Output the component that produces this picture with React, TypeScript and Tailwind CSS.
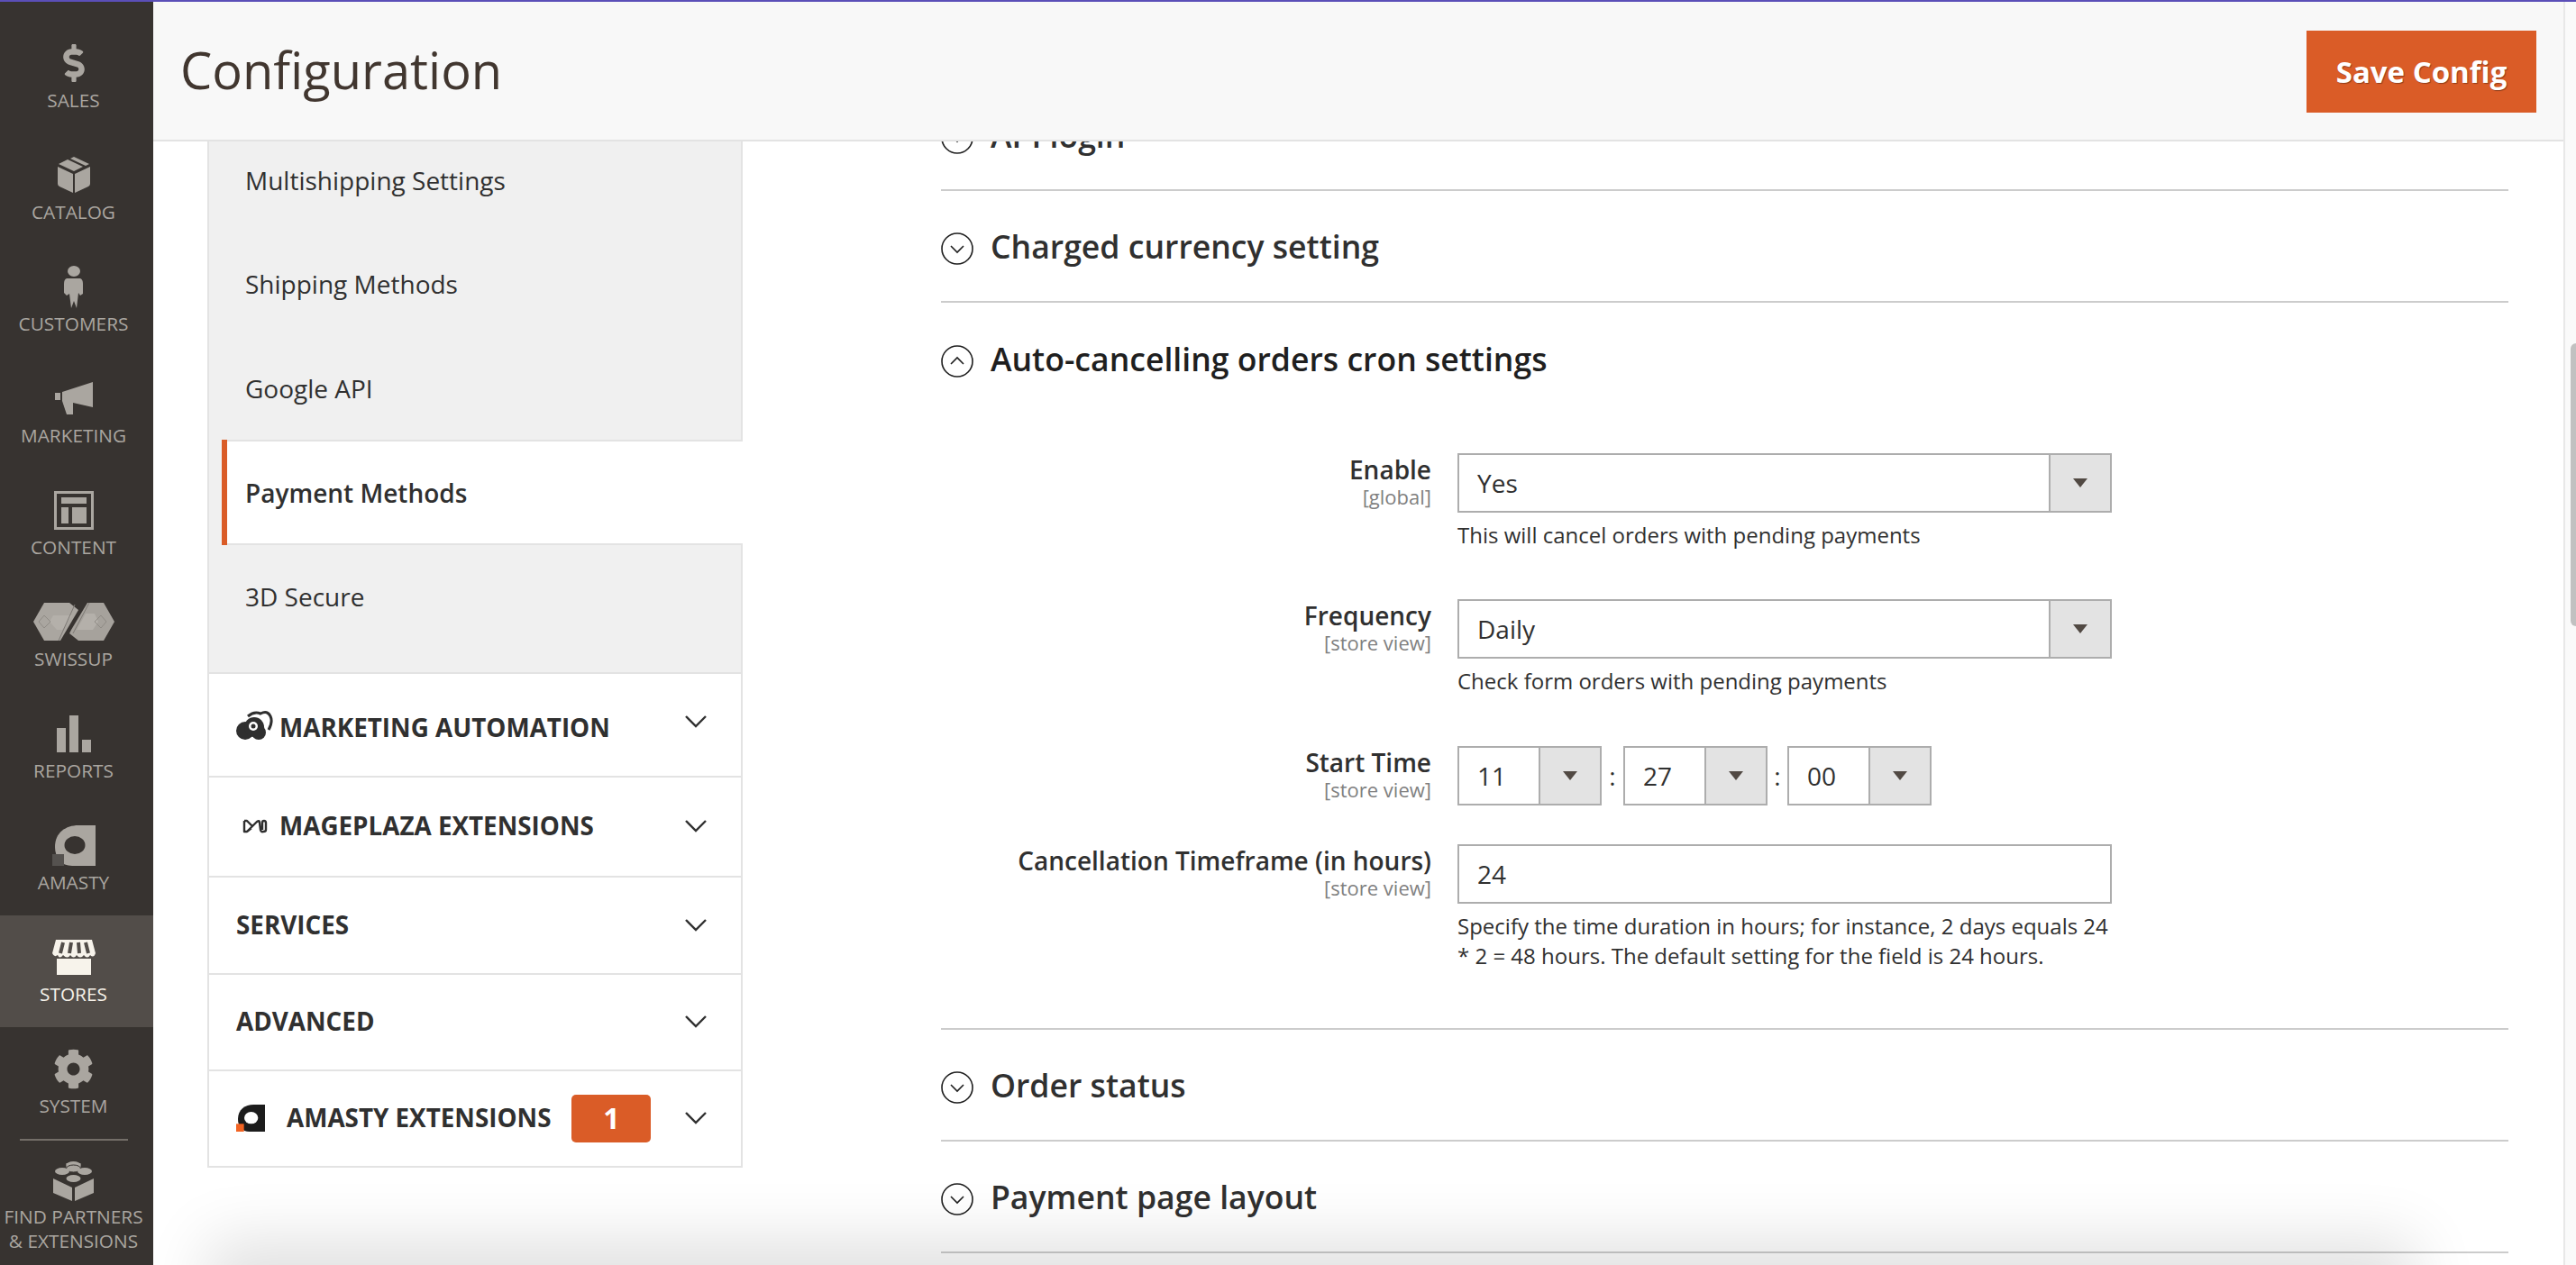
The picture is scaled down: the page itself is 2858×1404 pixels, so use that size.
import { FaCog, FaDollarSign } from "react-icons/fa";
import type { ReactNode } from "react";

function BoxIcon() {
  return (
    <svg viewBox="0 0 36 40" className="h-[40px] w-[36px] fill-[#aaa6a0]">
      <path d="M0 11 17 19V40L2 33Q0 32 0 30Z" />
      <path d="M36 11 19 19V40L34 33Q36 32 36 30Z" />
      <path d="M1 8 11 3 28 11 18 16Z" />
      <path d="M14 2 18 0 35 8 31 10Z" />
    </svg>
  );
}

function PersonIcon() {
  return (
    <svg viewBox="0 0 21 47" className="h-[47px] w-[21px] fill-[#aaa6a0]">
      <ellipse cx="11" cy="6" rx="7" ry="6" />
      <path d="M3 14H18Q21 15 21 20V31L18 33 16 30 14 47 11 39 8 47 6 31 3 33 0 30V20Q0 15 3 14Z" />
    </svg>
  );
}

function MegaphoneIcon() {
  return (
    <svg viewBox="0 0 42 36" className="h-[36px] w-[42px] fill-[#aaa6a0]">
      <path d="M0 12H6V20H0Z" />
      <path d="M8 11 42 0V28L20 23 20 36 13 36 8 21Z" />
    </svg>
  );
}

function ContentIcon() {
  return (
    <svg viewBox="0 0 44 43" className="h-[43px] w-[44px] fill-[#aaa6a0]">
      <path d="M0 0H44V43H0ZM3 3V40H41V3Z" fillRule="evenodd" />
      <rect x="8" y="7" width="28" height="7" />
      <rect x="8" y="18" width="8" height="18" />
      <rect x="20" y="18" width="16" height="18" />
    </svg>
  );
}

function SwissupIcon() {
  return (
    <svg viewBox="0 0 90 42" className="h-[42px] w-[90px]">
      <path d="M12 0H40L50 8 30 42H12L0 21Z" fill="#aaa6a0" />
      <path d="M50 0H78L90 21 78 42H50L40 34 42 30 60 0Z" fill="#a6a29c" />
      <path d="M22 14H36L43 14 32 30H26L18 21Z" fill="#b4b0aa" />
      <path d="M58 12H68L72 21 66 30H48Z" fill="#b4b0aa" />
      <path d="M12 14 19 21 12 28 6 21Z" fill="none" stroke="#8f8b85" strokeWidth="1" />
      <path d="M75 14 81 21 75 28 68 21Z" fill="none" stroke="#8f8b85" strokeWidth="1" />
      <path d="M46 2 28 42M62 0 44 34" stroke="#7d7974" strokeWidth="1" fill="none" />
    </svg>
  );
}

function ReportsIcon() {
  return (
    <svg viewBox="0 0 38 41" className="h-[41px] w-[38px] fill-[#aaa6a0]">
      <rect x="0" y="14" width="10" height="27" />
      <rect x="14" y="0" width="10" height="41" />
      <rect x="28" y="27" width="10" height="14" />
    </svg>
  );
}

// the small "a" mark, used in the menu and in the config tree
function AmastyMark({ body, corner, hole, className }: { body: string; corner: string; hole: string; className: string }) {
  return (
    <svg viewBox="0 0 48 45" className={className}>
      <path d="M3 24C3 8 15 0 29 0H48V45H22C10 45 3 36 3 24Z" fill={body} />
      <ellipse cx="25" cy="22" rx="11.5" ry="10" fill={hole} />
      <rect x="0" y="32" width="13" height="13" fill={corner} />
    </svg>
  );
}

function StoreIcon() {
  return (
    <svg viewBox="0 0 48 39" className="h-[39px] w-[48px] fill-[#f7f3eb]">
      <path d="M4 0H44L48 15Q46 21 42 17 39 22 35 17 31 22 27 17 24 22 20 17 17 22 12 17 8 22 6 17 2 20 0 15Z" />
      <path d="M12 3 9 15M21 3 19 15M29 3 30 15M37 3 40 15" stroke="#524d49" strokeWidth="4" />
      <path d="M5 21H43V39H5Z" />
    </svg>
  );
}

function LegoIcon() {
  return (
    <svg viewBox="0 0 45 45" className="h-[45px] w-[45px] fill-[#aaa6a0]">
      <path d="M0 20 21 30V45L0 36Z" />
      <path d="M45 20 24 30V45L45 36Z" />
      <ellipse cx="22.5" cy="5" rx="8" ry="4" />
      <rect x="14.5" y="3" width="16" height="5" />
      <ellipse cx="22.5" cy="9" rx="8" ry="4" stroke="#373330" />
      <ellipse cx="10" cy="12" rx="8" ry="4" />
      <ellipse cx="35" cy="12" rx="8" ry="4" />
      <ellipse cx="22.5" cy="20" rx="8" ry="4" />
    </svg>
  );
}

function CloudIcon() {
  return (
    <svg viewBox="0 0 42 37" className="h-[37px] w-[42px]">
      <path d="M13 9Q20 3 27 6 35 2 38 9 41 15 36 24" fill="none" stroke="#2f2f2f" strokeWidth="3" />
      <circle cx="10" cy="25" r="10" fill="#2f2f2f" />
      <circle cx="20" cy="21" r="11" fill="#2f2f2f" />
      <circle cx="25" cy="27" r="8" fill="#2f2f2f" />
      <circle cx="19" cy="20" r="5" fill="#fff" />
      <circle cx="19" cy="20" r="2.5" fill="#2f2f2f" />
    </svg>
  );
}

function MageplazaIcon() {
  return (
    <svg viewBox="0 0 28 16" className="h-[16px] w-[28px]" fill="none" stroke="#2f2f2f" strokeWidth="2.4">
      <path d="M2 2V14L5 14 16 3Q19 1 19 4L20 12Q21 15 23 14 26 14 26 12V4Q26 2 24 2 22 2 22 4V12M2 2 5 2 11 8M5 14 10 10" strokeLinejoin="round" />
    </svg>
  );
}

function ChevronDown() {
  return (
    <svg viewBox="0 0 24 14" className="h-[14px] w-[24px]" fill="none" stroke="#303030" strokeWidth="2.4">
      <path d="M1 1 12 12 23 1" />
    </svg>
  );
}

function CircleArrow({ open }: { open?: boolean }) {
  return (
    <svg viewBox="0 0 36 36" className="mt-[5px] h-[36px] w-[36px] shrink-0" fill="none" stroke="#1f1f1f" strokeWidth="1.6">
      <circle cx="18" cy="18" r="17" />
      {open ? <path d="M11 21 18 14 25 21" /> : <path d="M11 15 18 22 25 15" />}
    </svg>
  );
}

function Arrow() {
  return <span className="h-0 w-0 border-x-[8px] border-t-[10px] border-x-transparent border-t-[#514943]" />;
}

function MenuItem({ label, icon, active }: { label: ReactNode; icon: ReactNode; active?: boolean }) {
  return (
    <div className={`flex h-[124px] flex-col items-center pr-[7px] pt-[22px] ${active ? "bg-[#524d49] text-[#f7f3eb]" : "text-[#aaa6a0]"}`}>
      <div className="flex h-[48px] items-center justify-center">{icon}</div>
      <div className="mt-[4px] whitespace-nowrap text-center text-[20.8px] leading-[27px]">{label}</div>
    </div>
  );
}

function Sidebar() {
  return (
    <aside className="flex w-[170px] shrink-0 flex-col bg-[#373330] pt-[22px]">
      <MenuItem label="SALES" icon={<FaDollarSign className="h-[42px] w-[26px] text-[#aaa6a0]" />} />
      <MenuItem label="CATALOG" icon={<BoxIcon />} />
      <MenuItem label="CUSTOMERS" icon={<PersonIcon />} />
      <MenuItem label="MARKETING" icon={<MegaphoneIcon />} />
      <MenuItem label="CONTENT" icon={<ContentIcon />} />
      <MenuItem label="SWISSUP" icon={<SwissupIcon />} />
      <MenuItem label="REPORTS" icon={<ReportsIcon />} />
      <MenuItem label="AMASTY" icon={<AmastyMark body="#aaa6a0" corner="#55524f" hole="#373330" className="h-[45px] w-[48px]" />} />
      <MenuItem active label="STORES" icon={<StoreIcon />} />
      <MenuItem label="SYSTEM" icon={<FaCog className="h-[45px] w-[45px] text-[#aaa6a0]" />} />
      <div className="ml-[22px] h-[2px] w-[120px] bg-[#736e68]" />
      <MenuItem label={<>FIND PARTNERS<br />&amp; EXTENSIONS</>} icon={<LegoIcon />} />
    </aside>
  );
}

function TreeLink({ label, active }: { label: string; active?: boolean }) {
  if (active) {
    return (
      <div className="-mb-[1px] -mr-[2px] -mt-[0.5px] flex h-[117px] pl-[14px]">
        <div className="w-[6px] bg-[#da5c27]" />
        <div className="flex flex-1 items-center border-y-2 border-[#e3e3e3] bg-white pl-[20px] text-[28px] font-semibold text-[#303030]">
          {label}
        </div>
      </div>
    );
  }
  return <div className="flex h-[115.5px] items-center pl-[40px] text-[28px] text-[#303030]">{label}</div>;
}

function TreeGroup({ label, icon, gap, badge, height, offset }: { label: string; icon?: ReactNode; gap?: string; badge?: string; height: string; offset?: boolean }) {
  return (
    <div className={`flex items-center border-t-2 border-[#e3e3e3] pl-[30px] pr-[38px] ${height}`}>
      {icon && <div className={`flex shrink-0 justify-center ${gap}`}>{icon}</div>}
      <span className={`text-[27.8px] font-bold text-[#303030] ${offset ? "mt-[7px]" : ""}`}>{label}</span>
      {badge && (
        <span className="ml-[23px] flex h-[53px] w-[88px] items-center justify-center rounded-[5px] bg-[#da5c27] text-[32px] font-bold text-white">
          {badge}
        </span>
      )}
      <div className={`ml-auto ${offset ? "mb-[7px]" : ""}`}>
        <ChevronDown />
      </div>
    </div>
  );
}

function ConfigTree() {
  return (
    <div className="-mt-[15px] ml-[60px] w-[594px] shrink-0 self-start">
      <div className="border-x-2 border-[#e3e3e3] bg-[#f0f0f0] pb-[26px]">
        <TreeLink label="Multishipping Settings" />
        <TreeLink label="Shipping Methods" />
        <TreeLink label="Google API" />
        <TreeLink label="Payment Methods" active />
        <TreeLink label="3D Secure" />
      </div>
      <div className="border-x-2 border-b-2 border-[#e3e3e3] bg-white">
        <TreeGroup height="h-[115px]" offset label="MARKETING AUTOMATION" icon={<CloudIcon />} gap="mr-[6px] w-[42px]" />
        <TreeGroup height="h-[111px]" label="MAGEPLAZA EXTENSIONS" icon={<MageplazaIcon />} gap="mr-[6px] w-[42px]" />
        <TreeGroup height="h-[108px]" label="SERVICES" />
        <TreeGroup height="h-[107px]" label="ADVANCED" />
        <TreeGroup
          height="h-[107px]"
          label="AMASTY EXTENSIONS"
          icon={<AmastyMark body="#1c1c1c" corner="#f26322" hole="#fff" className="h-[30px] w-[32px]" />}
          gap="mr-[24px]"
          badge="1"
        />
      </div>
    </div>
  );
}

function SectionHeading({ label, open, clipped }: { label: string; open?: boolean; clipped?: boolean }) {
  return (
    <div className={`flex items-center gap-[19px] ${clipped ? "h-[122px]" : "h-[124px]"} ${open ? "" : "border-b-2 border-[#cccccc]"}`}>
      <CircleArrow open={open} />
      <span className={`text-[35.6px] font-semibold leading-[46px] ${open ? "text-[#1f1f1f]" : "text-[#303030]"}`}>{label}</span>
    </div>
  );
}

function FieldLabel({ label, scope }: { label: string; scope: string }) {
  return (
    <div className="w-[544px] shrink-0 text-right">
      <div className="text-[28px] font-semibold leading-[36px] text-[#303030]">{label}</div>
      <div className="text-[22px] leading-[24px] text-[#808080]">{scope}</div>
    </div>
  );
}

function SelectBox({ value, className }: { value: string; className: string }) {
  return (
    <div className={`flex h-[66px] items-stretch border-2 border-[#adadad] bg-white ${className}`}>
      <div className="flex flex-1 items-center pl-[20px] text-[28px] text-[#303030]">{value}</div>
      <div className="flex w-[68px] items-center justify-center border-l-2 border-[#adadad] bg-[#e3e3e3]">
        <Arrow />
      </div>
    </div>
  );
}

function Note({ children }: { children: ReactNode }) {
  return <div className="mt-[8px] w-[726px] text-[24px] leading-[33px] text-[#303030]">{children}</div>;
}

function CronForm() {
  return (
    <div className="h-[683px] border-b-2 border-[#cccccc] pt-[43px]">
      <div className="flex h-[162px] gap-[29px]">
        <FieldLabel label="Enable" scope="[global]" />
        <div>
          <SelectBox value="Yes" className="w-[726px]" />
          <Note>This will cancel orders with pending payments</Note>
        </div>
      </div>
      <div className="flex h-[163px] gap-[29px]">
        <FieldLabel label="Frequency" scope="[store view]" />
        <div>
          <SelectBox value="Daily" className="w-[726px]" />
          <Note>Check form orders with pending payments</Note>
        </div>
      </div>
      <div className="flex h-[109px] gap-[29px]">
        <FieldLabel label="Start Time" scope="[store view]" />
        <div className="flex h-[66px] items-center text-[28px] text-[#303030]">
          <SelectBox value="11" className="w-[160px]" />
          <span className="w-[24px] text-center">:</span>
          <SelectBox value="27" className="w-[160px]" />
          <span className="w-[22px] text-center">:</span>
          <SelectBox value="00" className="w-[160px]" />
        </div>
      </div>
      <div className="flex gap-[29px]">
        <FieldLabel label="Cancellation Timeframe (in hours)" scope="[store view]" />
        <div>
          <div className="flex h-[66px] w-[726px] items-center border-2 border-[#adadad] bg-white pl-[20px] text-[28px] text-[#303030]">24</div>
          <Note>
            Specify the time duration in hours; for instance, 2 days equals 24 * 2 = 48 hours. The default setting for the field is 24 hours.
          </Note>
        </div>
      </div>
    </div>
  );
}

export default function App() {
  return (
    <div className="relative flex h-[1404px] w-[2858px] flex-col overflow-hidden bg-white font-['Open_Sans',sans-serif]">
      <div className="h-[2px] shrink-0 bg-[#5b4fb8]" />
      <div className="flex min-h-0 flex-1">
        <Sidebar />
        <main className="flex min-w-0 flex-1 flex-col">
          <header className="relative z-10 flex h-[155px] shrink-0 items-center justify-between border-b-2 border-[#e3e3e3] bg-[#f8f8f8] pl-[30px] pr-[30px]">
            <h1 className="-mt-[3px] text-[56px] font-normal leading-none text-[#41362f]">Configuration</h1>
            <button className="mt-[2px] flex h-[91px] w-[255px] items-center justify-center bg-[#da5c27] text-[33px] font-bold text-white [text-shadow:1px_1px_1px_rgba(0,0,0,0.35)]">
              Save Config
            </button>
          </header>
          <div className="flex min-h-0 flex-1">
            <ConfigTree />
            <section className="-mt-[67px] ml-[220px] w-[1739px] shrink-0">
              <SectionHeading label="API login" clipped />
              <SectionHeading label="Charged currency setting" />
              <SectionHeading label="Auto-cancelling orders cron settings" open />
              <CronForm />
              <SectionHeading label="Order status" />
              <SectionHeading label="Payment page layout" />
            </section>
          </div>
        </main>
        <div className="w-[14px] shrink-0 border-l-2 border-[#e8e8e8] bg-[#fafafa]">
          <div className="ml-[6px] mt-[379px] h-[314px] rounded-l-[6px] bg-[#c1c1c1]" />
        </div>
      </div>
      {/* shadow from the sticky footer bar, just under the fold */}
      <div className="absolute left-[270px] top-[1416px] h-[60px] w-[2370px] bg-[#d8d8d8] shadow-[0_0_70px_40px_rgba(0,0,0,0.12)]" />
    </div>
  );
}
